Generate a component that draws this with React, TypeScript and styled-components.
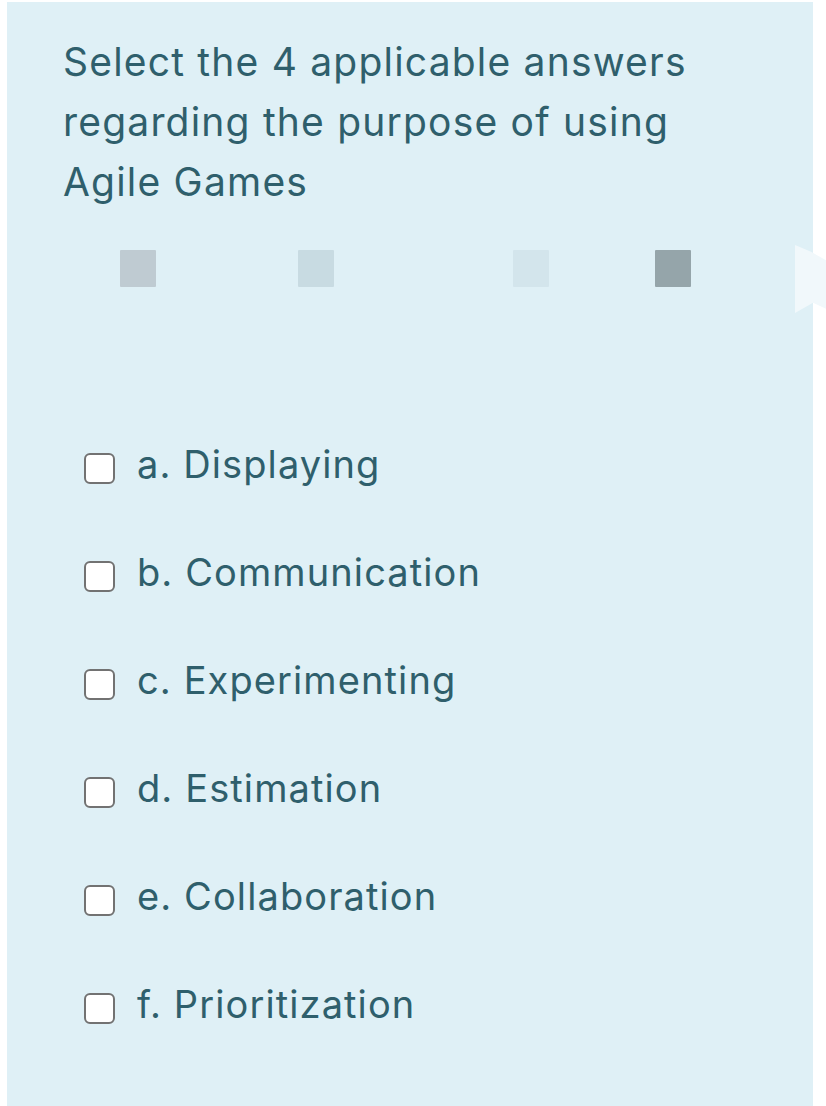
import React from 'react';
import styled, { createGlobalStyle } from 'styled-components';

const GlobalStyle = createGlobalStyle`
  html, body {
    margin: 0;
    padding: 0;
    background: #ffffff;
  }
  body {
    font-family: Inter, "Open Sans", sans-serif;
  }
`;

// bloques grises del arrastre, con su color y separación
const tiles = [
  { color: '#bfcbd2', left: 113 },
  { color: '#c8dbe2', left: 142 },
  { color: '#d3e5ec', left: 179 },
  { color: '#95a5aa', left: 106 },
];

const options = [
  'a. Displaying',
  'b. Communication',
  'c. Experimenting',
  'd. Estimation',
  'e. Collaboration',
  'f. Prioritization',
];

const Styled = {
  Page: styled.div`
    position: relative;
    width: 826px;
    height: 1106px;
    overflow: hidden;
    padding-top: 2px;
    box-sizing: border-box;
  `,
  Panel: styled.div`
    margin-left: 7px;
    width: 806px;
    height: 1104px;
    background: #dff0f6;
    display: flex;
    flex-direction: column;
  `,
  Title: styled.h1`
    margin: 0;
    padding: 30px 30px 0 56px;
    font-family: Inter, "Open Sans", sans-serif;
    font-size: 39px;
    font-weight: 400;
    line-height: 60px;
    color: #2f5f6c;
    letter-spacing: 1.2px;
  `,
  TileRow: styled.div`
    display: flex;
    align-items: center;
    margin-top: 38px;
    height: 37px;
  `,
  Tile: styled.div<{ $color: string; $left: number }>`
    width: 36px;
    height: 37px;
    margin-left: ${(p) => p.$left}px;
    background: ${(p) => p.$color};
    border-radius: 1px;
  `,
  Tab: styled.div`
    position: absolute;
    left: 795px;
    top: 245px;
    width: 40px;
    height: 68px;
    background: #f1f8fb;
    clip-path: polygon(0 0, 40% 10%, 100% 30%, 100% 100%, 45% 85%, 0 100%);
  `,
  OptionList: styled.div`
    display: flex;
    flex-direction: column;
    margin-top: 123px;
  `,
  Option: styled.label`
    display: flex;
    align-items: center;
    gap: 22px;
    height: 108px;
    padding-left: 77px;
    box-sizing: border-box;
    cursor: pointer;
  `,
  Box: styled.span`
    width: 31px;
    height: 31px;
    box-sizing: border-box;
    border: 2.5px solid #727272;
    border-radius: 6px;
    background: #ffffff;
    flex-shrink: 0;
    margin-top: 8px;
  `,
  Text: styled.span`
    font-family: Inter, "Open Sans", sans-serif;
    font-size: 38px;
    color: #2f5f6c;
    letter-spacing: 1.1px;
  `,
};

export default function App() {
  return (
    <>
      <GlobalStyle />
      <Styled.Page>
        <Styled.Panel>
          <Styled.Title>
            Select the 4 applicable answers
            <br />
            regarding the purpose of using
            <br />
            Agile Games
          </Styled.Title>
          <Styled.TileRow>
            {tiles.map((t, i) => (
              <Styled.Tile key={i} $color={t.color} $left={t.left} />
            ))}
          </Styled.TileRow>
          <Styled.OptionList>
            {options.map((o) => (
              <Styled.Option key={o}>
                <Styled.Box />
                <Styled.Text>{o}</Styled.Text>
              </Styled.Option>
            ))}
          </Styled.OptionList>
        </Styled.Panel>
        <Styled.Tab />
      </Styled.Page>
    </>
  );
}
